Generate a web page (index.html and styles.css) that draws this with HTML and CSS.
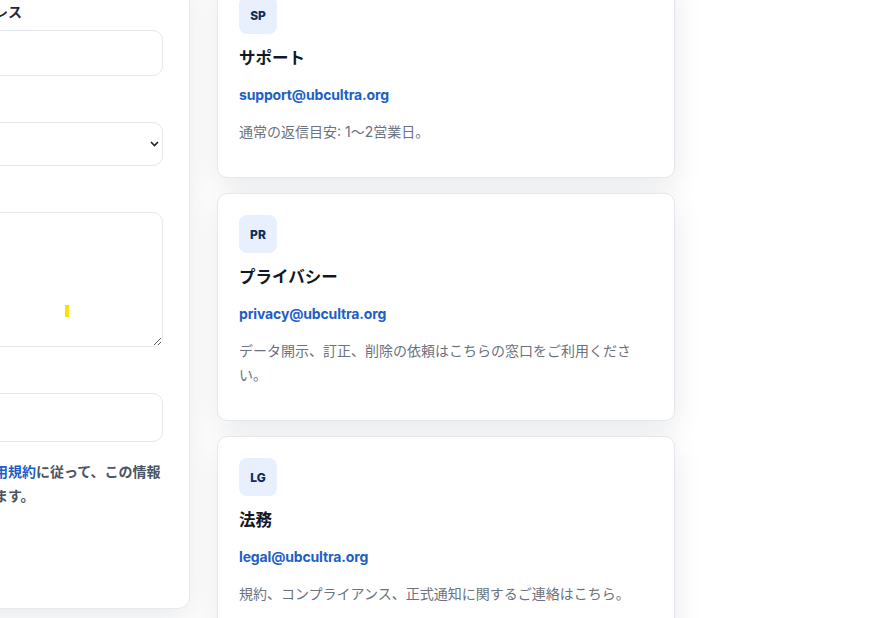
FILE: index.html
```html
<!DOCTYPE html>
<html lang="ja">

<head>
  <meta charset="UTF-8">
  <meta name="viewport" content="width=device-width, initial-scale=1.0">
  <title>お問い合わせ</title>
  <link rel="stylesheet" href="styles.css">
</head>

<body>
  <div class="layout">
    <form class="form-card" onsubmit="return false">
      <div class="field">
        <label for="email">メールアドレス</label>
        <input type="email" id="email" class="input" />
      </div>
      <div class="field">
        <label for="topic">種別</label>
        <select id="topic" class="input select">
          <option value=""></option>
          <option value="support">サポート</option>
          <option value="privacy">プライバシー</option>
          <option value="legal">法務</option>
        </select>
      </div>
      <div class="field">
        <label for="message">メッセージ</label>
        <div class="textarea-wrap">
          <textarea id="message" class="input textarea"></textarea>
          <span class="spell-mark"></span>
        </div>
      </div>
      <div class="field">
        <label for="org">所属団体</label>
        <input type="text" id="org" class="input input-tall" />
      </div>
      <p class="note">当団体の<a href="#">利用規約</a>に従って、この情報を取り扱います。</p>
      <button type="submit" class="submit">送信</button>
    </form>

    <div class="contacts">
      <div class="contact-card">
        <div class="badge">SP</div>
        <h3>サポート</h3>
        <a class="mail" href="mailto:support@ubcultra.org">support@ubcultra.org</a>
        <p>通常の返信目安: 1〜2営業日。</p>
      </div>
      <div class="contact-card">
        <div class="badge">PR</div>
        <h3>プライバシー</h3>
        <a class="mail" href="mailto:privacy@ubcultra.org">privacy@ubcultra.org</a>
        <p>データ開示、訂正、削除の依頼はこちらの窓口をご利用ください。</p>
      </div>
      <div class="contact-card">
        <div class="badge">LG</div>
        <h3>法務</h3>
        <a class="mail" href="mailto:legal@ubcultra.org">legal@ubcultra.org</a>
        <p>規約、コンプライアンス、正式通知に関するご連絡はこちら。</p>
      </div>
    </div>
  </div>
</body>

</html>
```

FILE: styles.css
```css
body {
  font-family: Inter, 'Noto Sans CJK JP', sans-serif;
  margin: 0;
  padding: 0;
  background: #ffffff;
  color: #111827;
  overflow: hidden;
  height: 618px;
}

.layout {
  display: grid;
  grid-template-columns: 293px 458px;
  gap: 27px;
  align-items: start;
  margin-left: -103px;
  margin-top: -27px;
}

.form-card {
  background: #ffffff;
  border: 1px solid #e6e9ef;
  border-radius: 12px;
  box-shadow: 0 10px 30px rgba(15, 23, 42, 0.09);
  padding: 28px 26px 34px 26px;
}

.field {
  margin-bottom: 18px;
}

.field label {
  display: block;
  font-size: 14px;
  font-weight: 700;
  line-height: 20px;
  margin-bottom: 8px;
  color: #1f2937;
}

.input {
  display: block;
  width: 100%;
  height: 46px;
  box-sizing: border-box;
  border: 1px solid #e5e7eb;
  border-radius: 10px;
  background: #ffffff;
  padding: 10px 12px;
  font-family: inherit;
  font-size: 14px;
  color: #111827;
}

.input:focus {
  outline: none;
  border-color: #1d5fc7;
}

.select {
  height: 44px;
  padding: 0 20px 0 8px;
  appearance: none;
  background: #ffffff url("data:image/svg+xml,%3Csvg xmlns='http://www.w3.org/2000/svg' width='9' height='6' viewBox='0 0 9 6'%3E%3Cpath d='M1 1l3.5 3.5L8 1' fill='none' stroke='%23222' stroke-width='1.6'/%3E%3C/svg%3E") no-repeat right 3px center;
}

.textarea-wrap {
  position: relative;
}

.textarea {
  height: 135px;
  resize: vertical;
}

.spell-mark {
  position: absolute;
  left: 141px;
  top: 93px;
  width: 4px;
  height: 12px;
  background: #ffe100;
}

.input-tall {
  height: 49px;
}

.note {
  margin: 16px 0 0;
  font-size: 14px;
  font-weight: 700;
  line-height: 24px;
  color: #4b5563;
}

.note a {
  color: #1d5fc7;
  text-decoration: none;
}

.submit {
  margin-top: 20px;
  height: 46px;
  width: 70px;
  border: none;
  border-radius: 10px;
  background: #1d5fc7;
  color: #ffffff;
  font-family: inherit;
  font-size: 14px;
  font-weight: 700;
}

.contacts {
  display: flex;
  flex-direction: column;
  gap: 15px;
  margin-top: 1px;
}

.contact-card {
  background: #ffffff;
  border: 1px solid #e3e7ee;
  border-radius: 10px;
  box-shadow: 0 10px 30px rgba(15, 23, 42, 0.09);
  padding: 21px 21px 33px;
}

.badge {
  width: 38px;
  height: 38px;
  border-radius: 8px;
  background: #e8f0fe;
  color: #102a5c;
  font-size: 12px;
  font-weight: 800;
  display: flex;
  align-items: center;
  justify-content: center;
  margin-bottom: 12px;
}

.contact-card h3 {
  margin: 0 0 15px;
  font-size: 16.5px;
  font-weight: 700;
  line-height: 24px;
  color: #111827;
}

.mail {
  display: block;
  font-size: 14px;
  font-weight: 700;
  line-height: 20px;
  letter-spacing: -0.15px;
  color: #1d5fc7;
  text-decoration: none;
}

.contact-card p {
  margin: 15px 0 0;
  font-size: 14px;
  line-height: 24px;
  color: #6b7280;
}
```
